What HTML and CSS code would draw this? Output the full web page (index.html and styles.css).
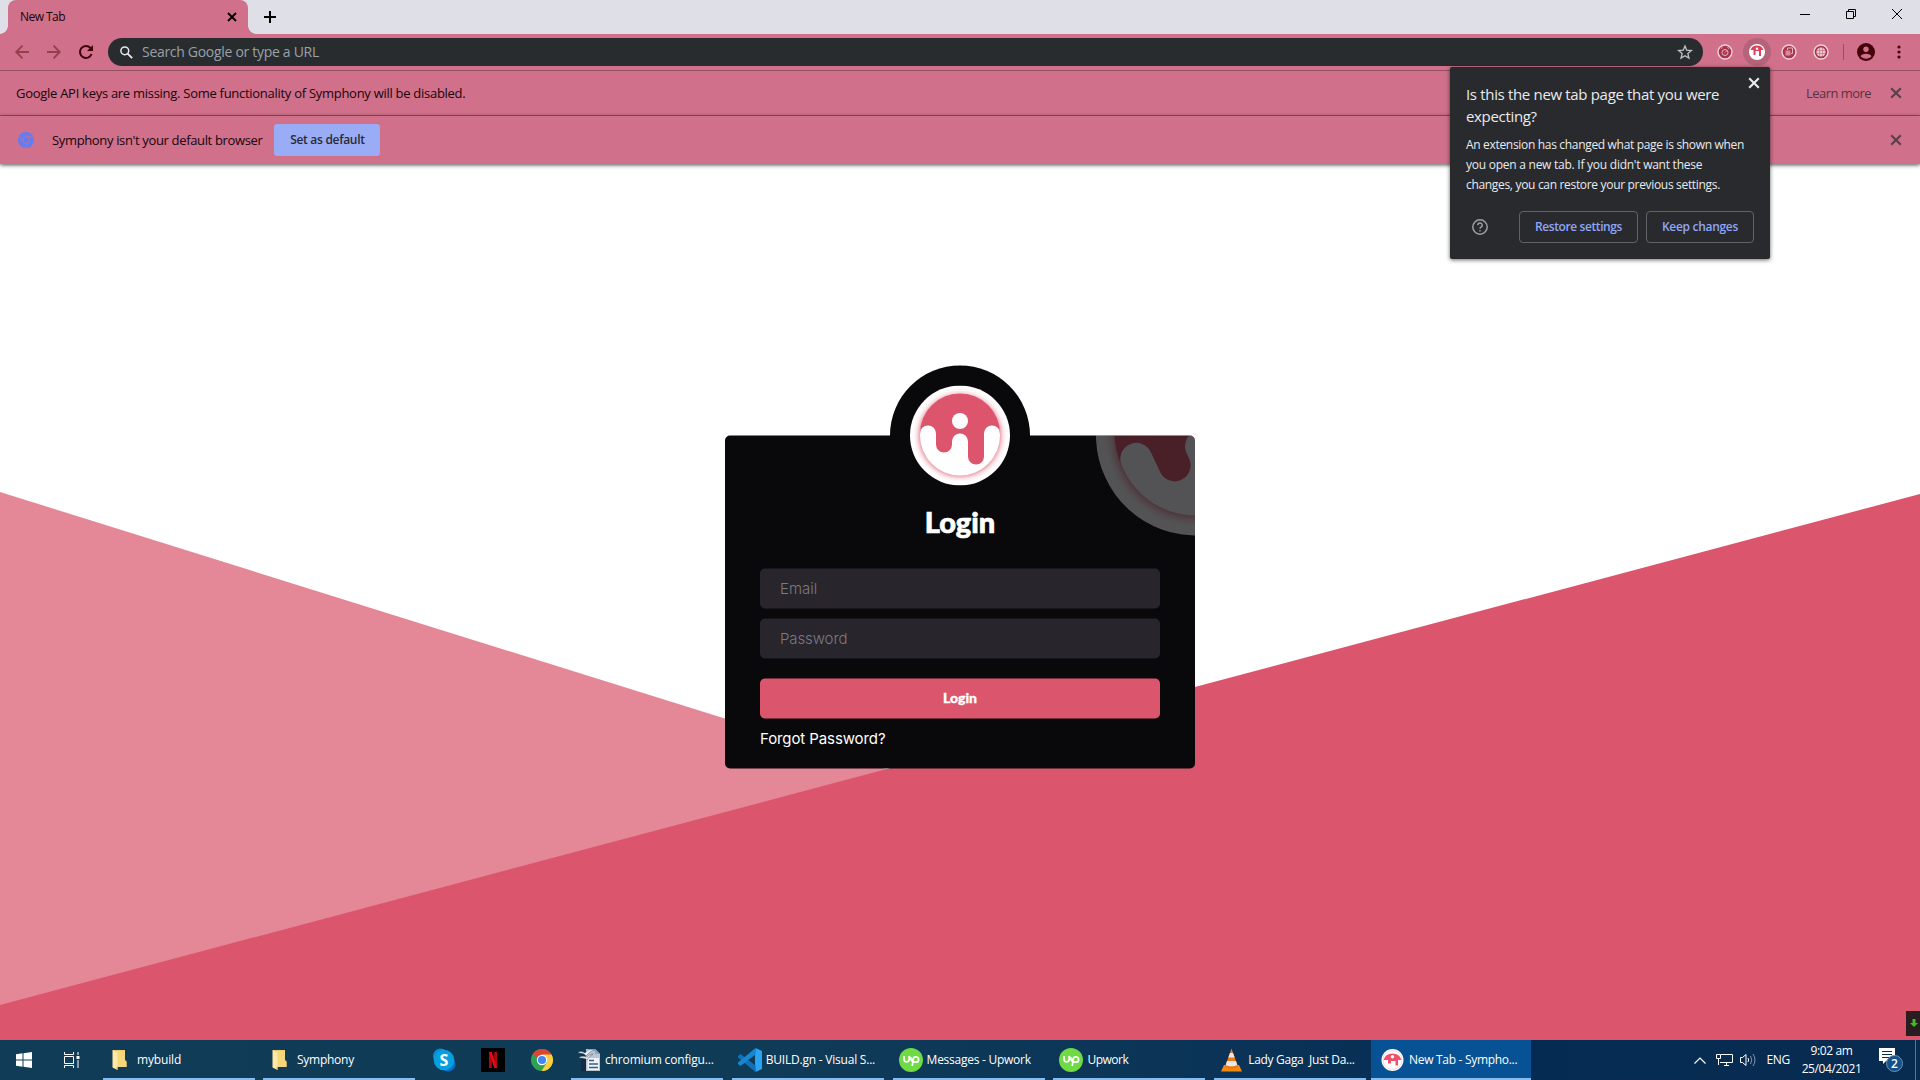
FILE: index.html
```html
<!DOCTYPE html>
<html lang="en">
<head>
<meta charset="utf-8">
<title>New Tab - Symphony</title>
<link rel="stylesheet" href="styles.css">
</head>
<body>
<svg class="defs" width="0" height="0">
  <defs>
    <filter id="glow" x="-30%" y="-30%" width="160%" height="160%"><feGaussianBlur stdDeviation="3"/></filter>
    <symbol id="logo" viewBox="-50 -50 100 100">
      <circle r="50" fill="#fff"/>
      <circle r="40.500" fill="#dc556d" filter="url(#glow)"/>
      <circle r="40" fill="#fff"/>
      <path fill="#dc556d" d="M-40-2A8 8 0 0 1-24-2V9A8 8 0 0 0-8 9V6A8 8 0 0 1 8 6V21A8 8 0 0 0 24 21V-2A8 8 0 0 1 40-2A40 40 0 0 0-40-2Z"/>
      <circle cy="-14.500" r="8" fill="#fff"/>
    </symbol>
    <symbol id="cross" viewBox="0 0 10 10"><path d="M1 1L9 9M9 1L1 9" fill="none" stroke="currentColor" stroke-width="1.800"/></symbol>
    <symbol id="folder" viewBox="0 0 24 24">
      <path fill="#e9c05c" d="M2 2H14V12L15.500 13V19H2Z"/><path fill="#f6d77c" d="M6 2.500H14V13L15.500 14V19H6Z"/><path fill="#ffe9a6" d="M1.500 2L6.500 4V22L1.500 19.500Z"/><path fill="#d9a93f" d="M5.500 19H7V22L5.500 21Z"/>
    </symbol>
    <symbol id="upwork" viewBox="0 0 24 24">
      <circle cx="12" cy="12" r="12" fill="#6fda44"/>
      <path d="M5 8V11.300A2.600 2.600 0 0 0 10.200 11.300V8C11 10.500 12.500 13 14 14M13.200 18L14.200 11.200A2.700 2.700 0 1 1 16.600 14.200C14.500 14.200 13 12.500 11.500 9.500" fill="none" stroke="#fff" stroke-width="1.700"/>
    </symbol>
  </defs>
</svg>
<div class="screen">
  <header class="tabstrip">
    <div class="tab"><span class="t-tab">New Tab</span><svg class="tab-x" viewBox="0 0 10 10"><use href="#cross"/></svg></div>
    <svg class="plus" viewBox="0 0 12 12"><path d="M6 0V12M0 6H12" stroke="#000" stroke-width="2"/></svg>
    <div class="winctl">
      <svg width="10" height="10"><path d="M0 5.500H10" stroke="#000"/></svg>
      <svg width="10" height="10"><path d="M.5 2.500H7.500V9.500H.5ZM2.500 2.500V.5H9.500V7.500H7.500" fill="none" stroke="#000"/></svg>
      <svg width="10" height="10"><path d="M0 0L10 10M10 0L0 10" stroke="#000"/></svg>
    </div>
  </header>
  <nav class="toolbar">
    <svg class="nav" viewBox="0 0 14 14"><path d="M14 7H1.500M7.500 .7L1.200 7L7.500 13.300" fill="none" stroke="#96404f" stroke-width="1.800"/></svg>
    <svg class="nav" viewBox="0 0 14 14"><path d="M0 7H12.500M6.500 .7L12.800 7L6.500 13.300" fill="none" stroke="#96404f" stroke-width="1.800"/></svg>
    <svg class="nav" viewBox="0 0 14 14"><path d="M12.600 9A6 6 0 1 1 11.500 3L12 3.500" fill="none" stroke="#430008" stroke-width="2"/><path d="M14 0V6H8Z" fill="#430008"/></svg>
    <div class="omnibox">
      <svg class="search" viewBox="0 0 13 13"><circle cx="4.800" cy="4.800" r="3.900" fill="none" stroke="#e8eaed" stroke-width="1.500"/><path d="M7.600 7.600L12.200 12.200" stroke="#e8eaed" stroke-width="1.800"/></svg>
      <span class="t-search">Search Google or type a URL</span>
      <svg class="star" viewBox="0 0 24 24"><path d="M12 3L14.600 9.300L21.500 9.900L16.300 14.400L17.900 21.100L12 17.500L6.100 21.100L7.700 14.400L2.500 9.900L9.400 9.300Z" fill="none" stroke="#bdc1c6" stroke-width="2"/></svg>
    </div>
    <div class="extensions">
      <svg class="ext" viewBox="0 0 28 28"><circle cx="14" cy="14" r="7" fill="#a8354e" stroke="#efd3d9" stroke-width="1.400"/><circle cx="14" cy="14.500" r="3" fill="none" stroke="#e8b2be"/><path d="M10 10.500L11.500 9.500M18 10.500L16.500 9.500M14 14.500L16 12.500" stroke="#e8b2be"/></svg>
      <svg class="ext lit" viewBox="0 0 28 28"><circle cx="14" cy="14" r="8" fill="#fff"/><path d="M7.500 12A7 7 0 0 1 20.500 12H18V18H16V13H12.500V17H10.500V12Z" fill="#dc405c"/><circle cx="14" cy="10.800" r="1.200" fill="#fff"/></svg>
      <svg class="ext" viewBox="0 0 28 28"><circle cx="14" cy="14" r="7" fill="#a8354e" stroke="#efd3d9" stroke-width="1.400"/><path d="M12.500 12V10H17.500V15.500H16" fill="none" stroke="#e8b2be"/><path d="M10.500 12.500H15.500V17.500H10.500Z" fill="#d98b9b"/></svg>
      <svg class="ext" viewBox="0 0 28 28"><circle cx="14" cy="14" r="7" fill="#a8354e" stroke="#efd3d9" stroke-width="1.400"/><circle cx="14" cy="14" r="4.600" fill="#ebc4cc"/><path d="M9.500 12.500H18.500M9.500 15.500H18.500M12.500 9.500V18.500M15.500 9.500V18.500" stroke="#b44a61" stroke-width=".4"/></svg>
    </div>
    <i class="sep"></i>
    <svg class="avatar" viewBox="0 0 18 18"><circle cx="9" cy="9" r="9" fill="#430008"/><circle cx="9" cy="6.300" r="2.700" fill="#d0708a"/><path d="M3.500 13.300C4.500 9.800 13.500 9.800 14.500 13.300C12 16.600 6 16.600 3.500 13.300Z" fill="#d0708a"/></svg>
    <svg class="dots" viewBox="0 0 4 14"><g fill="#430008"><circle cx="2" cy="2" r="1.600"/><circle cx="2" cy="7" r="1.600"/><circle cx="2" cy="12" r="1.600"/></g></svg>
  </nav>
  <div class="infobar api"><span class="t-api">Google API keys are missing. Some functionality of Symphony will be disabled.</span><span class="learn">Learn more</span><svg class="bar-x"><use href="#cross"/></svg></div>
  <div class="infobar default">
    <svg class="chromium" viewBox="0 0 16 16"><circle cx="8" cy="8" r="8" fill="#5f7df5"/><circle cx="8" cy="8" r="3.300" fill="#5f7df5" stroke="#b872a4" stroke-width="1"/><path d="M8 4.700H15M5.100 9.700L1.600 3.700M10.900 9.700L7.300 15.800" stroke="#b872a4" stroke-width="1"/></svg>
    <span class="t-default">Symphony isn't your default browser</span><button class="setdef"><span>Set as default</span></button><svg class="bar-x"><use href="#cross"/></svg>
  </div>
  <main class="page">
    <svg class="backdrop" viewBox="0 0 1920 876"><path d="M0 328L1900 922V876H0Z" fill="#e48797"/><path d="M0 841L1920 330V876H0Z" fill="#db556d"/></svg>
    <form class="card">
      <div class="corner"><svg><use href="#logo"/></svg></div>
      <div class="crest"><svg><use href="#logo"/></svg></div>
      <h1><span>Login</span></h1>
      <div class="field"><span class="t-email">Email</span></div>
      <div class="field"><span class="t-pass">Password</span></div>
      <button type="button" class="submit"><span>Login</span></button>
      <a class="forgot">Forgot Password?</a>
    </form>
    <div class="widget"><svg viewBox="0 0 8 8"><path d="M2.500 0H5.500V4H8L4 8L0 4H2.500Z" fill="#3fbf1f"/></svg></div>
  </main>
  <footer class="taskbar">
    <svg class="win" viewBox="0 0 16 16"><path fill="#fff" d="M0 2.200L6.500 1.300V7.500H0ZM7.500 1.200L16 0V7.500H7.500ZM0 8.500H6.500V14.700L0 13.800ZM7.500 8.500H16V16L7.500 14.800Z"/></svg>
    <svg class="taskview" viewBox="0 0 17 16"><path d="M1.500 0V2.500H10.500V0M1.500 16V13.500H10.500V16M1.500 4.500H10.500V11.500H1.500ZM15 0V3M15 8V16" fill="none" stroke="#fff"/><path d="M13.500 4H16.500V7H13.500Z" fill="#fff"/></svg>
    <div class="task"><svg><use href="#folder"/></svg><span class="w1">mybuild</span></div>
    <div class="task"><svg><use href="#folder"/></svg><span class="w2">Symphony</span></div>
    <div class="pins">
      <svg viewBox="0 0 24 24"><circle cx="8.500" cy="8" r="7.500" fill="#0a8bd8"/><circle cx="16" cy="16" r="7.500" fill="#0871c5"/><circle cx="12" cy="12" r="10.300" fill="#079fe0"/><text x="12" y="17.500" class="skype-s">S</text></svg>
      <svg viewBox="0 0 24 24"><path d="M0 0H24V24H0Z"/><path d="M8 4H10.800V20H8ZM13.200 4H16V20H13.200Z" fill="#b00710"/><path d="M8 4H10.800L16 20H13.200Z" fill="#e50914"/></svg>
      <svg viewBox="0 0 24 24"><circle cx="12" cy="12" r="11" fill="#2fa24f"/><path d="M12 12L2.500 6.500A11 11 0 0 1 21.500 6.500Z" fill="#db4437"/><path d="M12 6.500H21.500A11 11 0 0 1 11.500 23L16.800 14.700Z" fill="#ffcd40"/><circle cx="12" cy="12" r="5.200" fill="#fff"/><circle cx="12" cy="12" r="4.100" fill="#4285f4"/></svg>
    </div>
    <div class="apps">
      <div class="task"><svg viewBox="0 0 24 24"><path d="M4 4H11V23H4Z" fill="#172a44"/><path d="M9 1H18L23 6V23H9Z" fill="#b9c6d2"/><path d="M10.500 10H22V22H10.500Z" fill="#eef3f7"/><path d="M18 1V6H23" fill="#8fa3b8"/><path d="M12 12.500H17M12 16H21M12 19.500H21" stroke="#3b5f84" stroke-width="1.400"/><path d="M1 5C4 2 6 4 8 5C11 1 14 1 18 2C13 3 12 5 9 8C7 5 4 5 1 5ZM2 10C5 7 8 9 10 9C12 7 14 6 16 6C13 8 12 9 10 12C8 10 5 10 2 10Z" fill="#e9eff4" stroke="#45596c" stroke-width=".5"/></svg><span class="w3">chromium configu...</span></div>
      <div class="task"><svg viewBox="0 0 24 24"><path d="M17.500 0L24 3V21L17.500 24L17 18V6Z" fill="#2aa3f2"/><path d="M0 8L2.500 6L17.500 17.500V24L0 9.500Z" fill="#0f72b8"/><path d="M0 16L2.500 18L17.500 6.500V0L0 14.500Z" fill="#1686d0"/></svg><span class="w4">BUILD.gn - Visual S...</span></div>
      <div class="task"><svg><use href="#upwork"/></svg><span class="w5">Messages - Upwork</span></div>
      <div class="task"><svg><use href="#upwork"/></svg><span class="w6">Upwork</span></div>
      <div class="task"><svg viewBox="0 0 24 24"><path d="M4 17H19L22 23.500H1Z" fill="#f28a0f"/><path d="M11.500 0.500L18 19C15 21.500 8 21.500 5 19Z" fill="#ee7a17"/><path d="M10 5H13L14.700 9.500H8.300ZM7 13H16L17.300 17C14 18.800 9 18.800 5.700 17Z" fill="#e8e8e8"/></svg><span class="w7">Lady Gaga&nbsp; Just Da...</span></div>
      <div class="task active"><svg viewBox="0 0 24 24"><circle cx="11.500" cy="12" r="11" fill="#fff"/><path d="M2.500 12A9.500 9.500 0 0 1 20.500 12H17V17.500H14.500V13H10V15.500H7V12Z" fill="#f0506c"/><circle cx="11.500" cy="8.800" r="1.700" fill="#fff"/><circle cx="11.500" cy="12" r="9.500" fill="none" stroke="#f5a9b6" stroke-width=".5"/></svg><span class="w8">New Tab - Sympho...</span></div>
    </div>
    <div class="tray">
      <svg class="chev" viewBox="0 0 12 7"><path d="M.5 6.500L6 1L11.500 6.500" fill="none" stroke="#fff" stroke-width="1.200"/></svg>
      <svg class="net" viewBox="0 0 17 14"><path d="M5 1.500H16.500V9.500H4M8 12.500H13M10.500 9.500V12.500M.5 1.500H4.500V5.500H.5ZM2.500 5.500V12" fill="none" stroke="#fff"/></svg>
      <svg class="vol" viewBox="0 0 17 14"><path d="M.5 4.500H2.500L6 1.500V12.500L2.500 9.500H.5Z" fill="none" stroke="#fff"/><path d="M8 5Q9.300 7 8 9" fill="none" stroke="#fff"/><path d="M10.500 3Q13 7 10.500 11M13 1Q17 7 13 13" fill="none" stroke="#8396ad"/></svg>
      <span class="eng">ENG</span>
      <div class="clock"><span class="time">9:02 am</span><span class="date">25/04/2021</span></div>
      <svg class="note" viewBox="0 0 25 26"><path d="M0 1H16V14H7L4 17V14H0Z" fill="#fff"/><path d="M3 4.500H13M3 7.500H13M3 10.500H13" stroke="#0a2c50"/><circle cx="15.500" cy="16.500" r="8" fill="#14508a" stroke="#6d93b8"/><text x="15.500" y="21" class="badge">2</text></svg>
      <i class="peek"></i>
    </div>
  </footer>
  <aside class="bubble">
    <svg class="bubble-x"><use href="#cross"/></svg>
    <h2><span class="b1">Is this the new tab page that you were</span><span class="b2">expecting?</span></h2>
    <p><span class="b3">An extension has changed what page is shown when</span><span class="b4">you open a new tab. If you didn't want these</span><span class="b5">changes, you can restore your previous settings.</span></p>
    <div class="actions">
      <svg class="help" viewBox="0 0 16 16"><circle cx="8" cy="8" r="7.200" fill="none" stroke="#9aa0a6" stroke-width="1.500"/><path d="M5.800 6.300A2.200 2.200 0 1 1 8.700 8.300Q8 8.700 8 9.800M8 11V12.500" fill="none" stroke="#9aa0a6" stroke-width="1.400"/></svg>
      <button class="restore"><span>Restore settings</span></button><button class="keep"><span>Keep changes</span></button>
    </div>
  </aside>
</div>
</body>
</html>
```
FILE: styles.css
```css
* { box-sizing: border-box; }
body { margin: 0; overflow: hidden; font: 12px/16px "Open Sans", "Noto Sans", sans-serif; }
.defs { position: absolute; }
svg { display: block; flex: none; overflow: visible; }
span { white-space: nowrap; }
button { font: inherit; padding: 0; border: 0; display: flex; align-items: center; justify-content: center; }
.screen { position: relative; width: 1920px; height: 1080px; display: flex; flex-direction: column; }

.tabstrip { height: 34px; flex: none; background: #dfdfe8; display: flex; padding-left: 8px; }
.tab { position: relative; width: 240px; height: 34px; background: #d0708a; border-radius: 8px 8px 0 0; display: flex; align-items: center; justify-content: space-between; padding: 0 11px 0 12px; color: #17060a; }
.tab::before, .tab::after { content: ""; position: absolute; bottom: 0; width: 8px; height: 8px; }
.tab::before { left: -8px; background: radial-gradient(circle at 0 0, transparent 7.5px, #d0708a 8px); }
.tab::after { right: -8px; background: radial-gradient(circle at 100% 0, transparent 7.5px, #d0708a 8px); }
.t-tab { letter-spacing: -.55px; }
.tab-x { width: 10px; height: 10px; color: #000; }
.plus { width: 12px; height: 12px; margin: 11px 0 0 16px; }
.winctl { margin: 9px 18px 0 auto; display: flex; gap: 36px; }

.toolbar { height: 37px; flex: none; background: #d0708a; border-bottom: 1px solid #965062; display: flex; align-items: center; padding-left: 15px; }
.nav { width: 14px; height: 14px; margin-right: 18px; }
.nav + .nav + .nav { margin-right: 15px; }
.omnibox { width: 1595px; height: 28px; border-radius: 14px; background: #292c2f; display: flex; align-items: center; padding: 0 10px 0 12px; color: #9aa0a6; }
.search { width: 13px; height: 13px; margin-right: 9px; }
.t-search { font-size: 14px; letter-spacing: -.3px; }
.star { width: 16px; height: 16px; margin-left: auto; }
.extensions { display: flex; gap: 4px; margin-left: 8px; }
.ext { width: 28px; height: 28px; border-radius: 50%; }
.lit { background: #b5627b; }
.sep { width: 1px; height: 16px; background: #a04a5e; margin: 0 13px 0 8px; }
.avatar { width: 18px; height: 18px; margin-right: 22px; }
.dots { width: 4px; height: 14px; }

.infobar { flex: none; background: #d0708a; display: flex; align-items: center; padding: 0 18px 0 16px; color: #17060a; font-size: 13px; }
.api { height: 45px; border-bottom: 1px solid #965062; }
.default { height: 48px; box-shadow: 0 1px 4px rgba(0,0,0,.7); position: relative; z-index: 1; }
.t-api { letter-spacing: -.28px; }
.t-default { letter-spacing: -.35px; }
.learn { margin-left: auto; color: #5a3340; margin-right: 19px; letter-spacing: -.55px; }
.bar-x { width: 12px; height: 12px; color: #574149; }
.default .bar-x { margin-left: auto; }
.chromium { width: 16px; height: 16px; margin: 0 18px 0 2px; }
.setdef { width: 106px; height: 32px; margin-left: 12px; border-radius: 3px; background: #9bacf6; color: #262a35; font-size: 12px; font-weight: 600; letter-spacing: -.3px; }

.page { position: relative; flex: 1; background: #fff; display: flex; justify-content: center; align-items: flex-start; }
.backdrop { position: absolute; inset: 0; width: 1920px; height: 876px; overflow: hidden; }
.card { position: relative; width: 470px; height: 333px; margin-top: 271px; transform: translateY(.5px); border-radius: 5px; background: #09090b; padding: 60px 35px 0; display: flex; flex-direction: column; font-family: Inter, sans-serif; }
.corner { position: absolute; inset: 0; overflow: hidden; border-radius: 5px; opacity: .3; }
.corner svg { position: absolute; left: 371px; top: -100px; width: 200px; height: 200px; transform: rotate(-25deg); }
.crest { position: absolute; left: 165px; top: -70.5px; width: 140px; height: 140px; border-radius: 50%; background: #09090b; padding: 20px; }
.crest svg { width: 100px; height: 100px; }
h1 { margin: 0 0 21px; height: 52px; color: #fff; text-align: center; font: 900 29px/52px Lato, sans-serif; -webkit-text-stroke: .7px #fff; }
.field { height: 40px; flex: none; margin-bottom: 10px; border-radius: 5px; background: #28252c; padding-left: 20px; display: flex; align-items: center; color: #7d7b7f; font-size: 15px; font-weight: 300; }
.t-pass { letter-spacing: -.1px; }
.submit { height: 40px; flex: none; margin-top: 10px; border-radius: 5px; background: #db556d; color: #fff; font: 900 14px/20px Lato, sans-serif; padding-bottom: 2px; -webkit-text-stroke: .3px #fff; }
.forgot { color: #fff; font-size: 15px; line-height: 20px; margin-top: 10px; letter-spacing: -.1px; }
.widget { position: absolute; right: 0; top: 847px; width: 14px; height: 25px; background: #2a1d22; padding: 8px 2px 0 4px; }
.widget svg { width: 8px; height: 8px; }

.taskbar { height: 40px; flex: none; background: linear-gradient(90deg, #103c58 0%, #103b57 40%, #0a3357 65%, #062b53 80%, #082b50 100%); display: flex; align-items: center; color: #fff; padding-left: 16px; }
.win { width: 16px; height: 16px; margin-right: 31px; }
.taskview { width: 17px; height: 16px; margin-right: 19px; }
.task { position: relative; width: 160px; height: 40px; display: flex; align-items: center; padding-left: 12px; gap: 2px; }
.task svg { width: 24px; height: 24px; }
.task::after { content: ""; position: absolute; left: 4px; right: 4px; bottom: 0; height: 2px; background: #86bdf0; }
.active { background: #075294; }
.active::after { left: 0; right: 0; }
.pins { display: flex; gap: 25px; margin-left: 13px; }
.pins svg { width: 24px; height: 24px; }
.skype-s { font: 700 16px "Open Sans", sans-serif; fill: #fff; text-anchor: middle; }
.apps { display: flex; gap: .8px; margin-left: 13px; }
.apps .task { padding-left: 10px; gap: 4px; }
.w1, .w3 { letter-spacing: -.15px; }
.w4 { letter-spacing: -.22px; }
.w2, .w5 { letter-spacing: -.26px; }
.w7, .w8 { letter-spacing: -.3px; }
.w6 { letter-spacing: -.5px; }
.tray { margin-left: auto; display: flex; align-items: center; height: 40px; }
.chev { width: 12px; height: 7px; margin-right: 10px; }
.net { width: 17px; height: 14px; margin-right: 7px; }
.vol { width: 17px; height: 14px; margin-right: 9px; }
.eng { letter-spacing: -.3px; }
.clock { width: 59px; margin: 0 18px 0 12px; display: flex; flex-direction: column; align-items: center; line-height: 18px; letter-spacing: -.4px; }
.note { width: 25px; height: 26px; margin-right: 11px; }
.badge { font: 600 12px "Open Sans", sans-serif; fill: #fff; text-anchor: middle; }
.peek { width: 1px; height: 40px; background: #60758d; margin-right: 4px; }

.bubble { position: absolute; z-index: 2; left: 1450px; top: 67px; width: 320px; height: 192px; border-radius: 2px; background: #292a2d; color: #e8eaed; box-shadow: 0 1px 4px rgba(0,0,0,.6); padding: 16px; }
.bubble-x { position: absolute; right: 10px; top: 10px; width: 12px; height: 12px; }
.bubble h2 { margin: 0; font-size: 15px; font-weight: 400; line-height: 22px; letter-spacing: -.33px; display: flex; flex-direction: column; align-items: flex-start; }
.bubble p { margin: 8px 0 16px; line-height: 20px; letter-spacing: -.32px; display: flex; flex-direction: column; align-items: flex-start; }
.b4 { letter-spacing: -.25px; }
.actions { display: flex; align-items: center; gap: 8px; }
.help { width: 16px; height: 16px; margin: 0 23px 0 6px; }
.actions button { height: 32px; border: 1px solid #5f6368; border-radius: 4px; background: none; color: #8fa6f8; font-weight: 600; }
.actions .restore { width: 119px; letter-spacing: -.4px; }
.actions .keep { width: 108px; letter-spacing: -.3px; }
```
